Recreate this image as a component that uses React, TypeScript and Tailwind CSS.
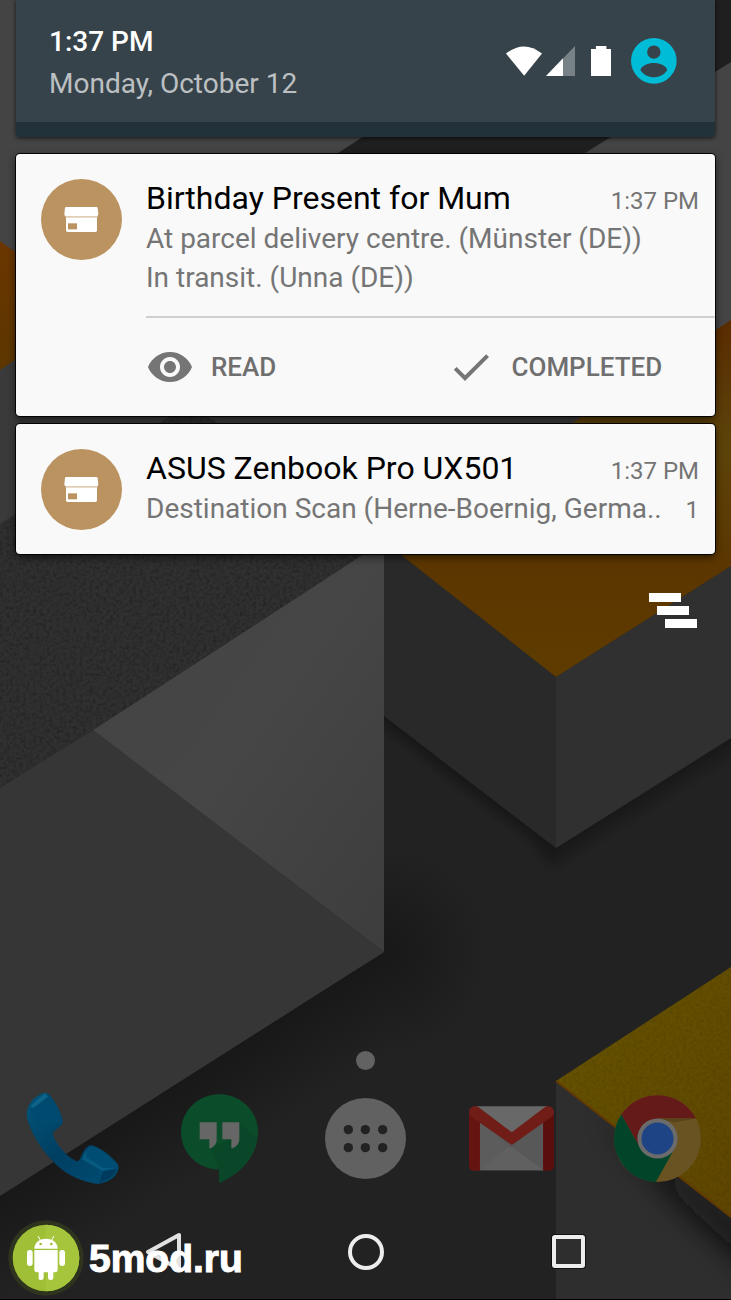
import type { ReactNode } from "react";

function Wallpaper() {
  return (
    <svg
      className="absolute inset-0 -z-10 h-full w-full"
      viewBox="0 0 731 1300"
      preserveAspectRatio="xMidYMid slice"
      aria-hidden="true"
    >
      <defs>
        <linearGradient id="lightFace" x1="0" y1="0" x2="1" y2="1">
          <stop offset="0" stopColor="#434343" />
          <stop offset="0.5" stopColor="#464646" />
          <stop offset="1" stopColor="#3d3d3d" />
        </linearGradient>
        <linearGradient id="orange" x1="0" y1="0" x2="0" y2="1">
          <stop offset="0" stopColor="#5a2c00" />
          <stop offset="0.35" stopColor="#5c430a" />
          <stop offset="0.7" stopColor="#5c3600" />
          <stop offset="1" stopColor="#5e3c00" />
        </linearGradient>
        <linearGradient id="leftOrange" x1="0" y1="0" x2="0" y2="1">
          <stop offset="0" stopColor="#6b3600" />
          <stop offset="1" stopColor="#5c3600" />
        </linearGradient>
        <linearGradient id="yellow" x1="0" y1="0" x2="1" y2="1">
          <stop offset="0" stopColor="#665400" />
          <stop offset="1" stopColor="#5f4600" />
        </linearGradient>
        <linearGradient id="slabShadow" gradientUnits="userSpaceOnUse" x1="192" y1="1074" x2="240" y2="1150">
          <stop offset="0" stopColor="#181818" />
          <stop offset="1" stopColor="#181818" stopOpacity="0" />
        </linearGradient>
        <radialGradient id="slabCorner" gradientUnits="userSpaceOnUse" cx="384" cy="952" r="104">
          <stop offset="0" stopColor="#181818" />
          <stop offset="1" stopColor="#181818" stopOpacity="0" />
        </radialGradient>
        <linearGradient id="cubeShadowLeft" gradientUnits="userSpaceOnUse" x1="470" y1="782" x2="460" y2="795">
          <stop offset="0" stopColor="#171717" />
          <stop offset="1" stopColor="#171717" stopOpacity="0" />
        </linearGradient>
        <linearGradient id="cubeShadowRight" gradientUnits="userSpaceOnUse" x1="643" y1="793" x2="655" y2="812">
          <stop offset="0" stopColor="#181818" />
          <stop offset="1" stopColor="#181818" stopOpacity="0" />
        </linearGradient>
        <radialGradient id="cubeCorner" gradientUnits="userSpaceOnUse" cx="556" cy="848" r="26">
          <stop offset="0" stopColor="#181818" />
          <stop offset="1" stopColor="#181818" stopOpacity="0" />
        </radialGradient>
        <clipPath id="lowerFace">
          <polygon points="556,1081 731,1217 731,1300 556,1300" />
        </clipPath>
        <filter id="blur" x="-40%" y="-40%" width="180%" height="180%">
          <feGaussianBlur stdDeviation="16" />
        </filter>
        <filter id="grain" x="0" y="0" width="100%" height="100%">
          <feTurbulence type="fractalNoise" baseFrequency="0.3" numOctaves="3" seed="4" />
          <feColorMatrix values="0 0 0 0 0  0 0 0 0 0  0 0 0 0 0  1.6 0 0 0 -0.65" />
          <feComposite in2="SourceGraphic" operator="in" />
        </filter>
      </defs>
      <rect width="731" height="1300" fill="#222222" />
      <polygon points="0,0 731,0 731,62 582,153 338,153 0,380" fill="#1f1f1f" />
      <polygon points="0,0 574,0 338,153 200,420 0,530" fill="#444444" />
      <polygon points="731,62 574,160 384,424 731,424" fill="#444444" />
      <polygon points="0,241 40,270 40,344 0,370" fill="url(#leftOrange)" />
      <polygon points="0,370 40,344 600,344 600,420 384,560 0,560" fill="#3a3a3a" />
      <polygon points="0,524 157,424 190,404 384,541 0,790" fill="#303030" />
      <polygon points="0,524 157,424 190,404 384,541 0,790" fill="#000" filter="url(#grain)" opacity="0.35" />
      <polygon points="384,716 556,848 556,868 384,736" fill="url(#cubeShadowLeft)" />
      <polygon points="556,848 731,738 731,778 556,888" fill="url(#cubeShadowRight)" />
      <path d="M556 822A26 26 0 0 0 556 874Z" fill="url(#cubeCorner)" />
      <polygon points="384,541 556,677 556,848 384,716" fill="#292929" />
      <polygon points="556,677 731,566 731,738 556,848" fill="#303030" />
      <polygon points="731,320 384,545 400,554 556,677 731,566" fill="url(#orange)" />
      <polygon points="384,952 0,1196 0,1300 384,1058" fill="url(#slabShadow)" />
      <path d="M384 848A104 104 0 0 1 384 1056Z" fill="url(#slabCorner)" />
      <polygon points="0,788 93,730 384,952 0,1196" fill="#363636" />
      <polygon points="93,730 384,541 384,952" fill="url(#lightFace)" />
      <polygon points="556,1081 731,1217 731,1300 556,1300" fill="#2e2e2e" />
      <g clipPath="url(#lowerFace)">
        <polygon points="600,1110 780,1250 780,1290 680,1200" fill="#0a0a0a" filter="url(#blur)" />
      </g>
      <polygon points="556,1081 731,967 731,1217" fill="url(#yellow)" />
      <polygon points="556,1081 731,967 731,1217" fill="#000" filter="url(#grain)" opacity="0.14" />
      <line x1="556" y1="1081" x2="731" y2="1217" stroke="#633a00" strokeWidth="2" />
    </svg>
  );
}

function StatusHeader() {
  return (
    <header className="mx-4 rounded-b-sm bg-gradient-to-b from-[#1e292f] to-[#22323a] pb-[15px] shadow-[0_1px_4px_rgba(0,0,0,0.7)]">
      <div className="flex h-[122px] items-center justify-between bg-[#37434a] pr-[38px] pl-[33px]">
        <div className="pt-1 text-[28px] leading-[42px]">
          <p className="font-medium text-white">1:37 PM</p>
          <p className="text-[#bcc0c3]">Monday, October 12</p>
        </div>
        <div className="flex items-center">
          <svg className="h-[30px] w-9" viewBox="78 137 109 89" aria-label="Wi-Fi">
            <path d="M78 159 Q132 116 187 159 L133 226Z" fill="#fff" />
          </svg>
          <svg className="ml-1 h-[30px] w-[29px]" viewBox="198 138 87 90" aria-label="Signal">
            <path d="M285 138V228H198Z" fill="#788185" />
            <path d="M249 175V228H198Z" fill="#fff" />
          </svg>
          <svg className="ml-4 h-[30px] w-5" viewBox="333 135 61 91" aria-label="Battery">
            <path d="M348 135h32v9h14v82h-61v-82h15z" fill="#fff" />
          </svg>
          <button type="button" aria-label="User profile" className="ml-5">
            <svg className="size-[46px]" viewBox="454 114 137 137">
              <circle cx="522" cy="182" r="68" fill="#00bcd7" />
              <circle cx="522" cy="156" r="20" fill="#37434a" />
              <path d="M482 209C492 182 552 182 562 209C544 238 500 238 482 209Z" fill="#37434a" />
            </svg>
          </button>
        </div>
      </div>
    </header>
  );
}

function ParcelIcon() {
  return (
    <svg className="mt-0.5 size-[81px] shrink-0" viewBox="0 0 243 243" aria-hidden="true">
      <circle cx="121.500" cy="121.500" r="121.500" fill="#ba9360" />
      <path d="M75 84H166Q169 84 170 87L172 105Q172 111 168 111H74Q70 111 70 105L72 87Q73 84 75 84Z" fill="#fff" />
      <path d="M75 115H168V154Q168 159 163 159H80Q75 159 75 154Z" fill="#fff" />
      <rect x="73" y="111" width="97" height="4" fill="#e0cdb5" />
      <rect x="81" y="133" width="27" height="18" fill="#ba9360" />
    </svg>
  );
}

function Notification({
  title,
  lines,
  count,
  children,
}: {
  title: string;
  lines: string[];
  count?: number;
  children?: ReactNode;
}) {
  return (
    <article className="overflow-hidden rounded bg-[#f9f9f9] shadow-[0_0_0_1px_rgba(0,0,0,0.9),0_3px_8px_rgba(0,0,0,0.6)]">
      <div className={`flex gap-6 pt-[23px] pr-4 pl-[25px] ${children ? "pb-[19px]" : "pb-6"}`}>
        <ParcelIcon />
        <div className="min-w-0 flex-1">
          <div className="flex items-baseline justify-between">
            <h2 className="truncate text-[32px] leading-[42px] text-black">{title}</h2>
            <time className="shrink-0 text-2xl leading-none text-[#757575]">1:37 PM</time>
          </div>
          <div className="flex items-baseline justify-between text-[28px] leading-[39px] text-[#757575]">
            <div>
              {lines.map((line) => (
                <p key={line}>{line}</p>
              ))}
            </div>
            {count !== undefined && <span className="text-2xl leading-none">{count}</span>}
          </div>
        </div>
      </div>
      {children}
    </article>
  );
}

function Actions() {
  return (
    <div className="ml-[130px] grid h-[100px] grid-cols-2 border-t-2 border-[#cfcfcf] text-[26px] font-medium text-[#6f6f6f]">
      <button type="button" className="flex items-center gap-[17px]">
        <svg className="size-12" viewBox="0 0 24 24" fill="#757575">
          <path d="M12 4.500C7 4.500 2.730 7.610 1 12c1.730 4.390 6 7.500 11 7.500s9.270-3.110 11-7.500c-1.730-4.390-6-7.500-11-7.500zM12 17c-2.760 0-5-2.240-5-5s2.240-5 5-5 5 2.240 5 5-2.240 5-5 5zm0-8c-1.660 0-3 1.340-3 3s1.340 3 3 3 3-1.340 3-3-1.340-3-3-3z" />
        </svg>
        READ
      </button>
      <button type="button" className="flex items-center gap-[17px] pl-4">
        <svg className="size-12" viewBox="0 0 24 24" fill="#757575">
          <path d="M9 16.170L4.830 12l-1.420 1.410L9 19 21 7l-1.410-1.410z" />
        </svg>
        COMPLETED
      </button>
    </div>
  );
}

function PhoneIcon() {
  return (
    <svg className="h-[92px] w-[94px]" viewBox="80 30 282 276" aria-hidden="true">
      <defs>
        <linearGradient id="phoneBody" x1="0" y1="0" x2="1" y2="1">
          <stop offset="0" stopColor="#00557a" />
          <stop offset="0.5" stopColor="#003f62" />
          <stop offset="1" stopColor="#004d75" />
        </linearGradient>
      </defs>
      <path
        d="M137 32C120 34 97 52 88 72C80 90 82 104 85 115C98 158 126 205 172 250C205 280 250 302 298 306C322 302 346 288 352 274C360 262 360 250 350 240C330 218 300 194 276 190C262 190 252 208 246 222C242 232 238 240 230 237C200 222 172 190 160 156C160 146 184 136 190 124C194 108 172 66 152 40Q146 32 137 32Z"
        fill="url(#phoneBody)"
      />
      <path d="M140 36L100 70Q90 84 98 98L122 128Q142 134 186 118C190 104 170 62 150 40Q146 34 140 36Z" fill="#004a70" />
      <path d="M137 34L93 72L102 78L146 44Z" fill="#0d6388" />
      <path d="M274 192C264 200 254 214 250 230L308 264Q336 268 355 256C356 244 300 194 274 192Z" fill="#004d74" />
      <path d="M260 208Q252 222 249 232L308 266L350 258L310 257L260 226Z" fill="#085b80" />
      <path d="M298 304L312 268L352 262Q354 280 298 304Z" fill="#003a5e" />
    </svg>
  );
}

function HangoutsIcon() {
  return (
    <svg className="h-[89px] w-[77px]" viewBox="543 39 231 266" aria-hidden="true">
      <path
        d="M658 39C722 39 774 89 774 152C774 225 720 280 657 305V265C594 265 543 215 543 152C543 89 594 39 658 39Z"
        fill="#0b4d2b"
      />
      <path d="M718 123L772 170C754 245 706 285 657 305V265L630 202L718 160Z" fill="#0a4728" />
      <path d="M599 123h51v52c0 12-8 24-22 27v-28h-29zM667 123h51v52c0 12-10 24-24 27v-28h-27z" fill="#666666" />
    </svg>
  );
}

function AppsIcon() {
  return (
    <svg className="size-[81px]" viewBox="0 0 243 243" aria-hidden="true">
      <circle cx="121.500" cy="121.500" r="121.500" fill="#616161" />
      <g fill="#222222">
        <circle cx="70" cy="95" r="14" />
        <circle cx="121" cy="95" r="14" />
        <circle cx="173" cy="95" r="14" />
        <circle cx="70" cy="149" r="14" />
        <circle cx="121" cy="149" r="14" />
        <circle cx="173" cy="149" r="14" />
      </g>
    </svg>
  );
}

function GmailIcon() {
  return (
    <svg className="h-[65px] w-[85px]" viewBox="27 195 256 195" aria-hidden="true">
      <rect x="45" y="196" width="220" height="192" fill="#626262" />
      <path d="M60 236L156 310L60 388Z" fill="#5c5c5c" />
      <path d="M60 236L156 310L252 236V388H225Z" fill="#585858" />
      <path d="M60 388L156 318L252 388Z" fill="#606060" />
      <path d="M50 196H262L156 274Z" fill="#686868" />
      <path d="M27 212V374Q27 390 43 390H60V230Z" fill="#651411" />
      <path d="M283 212V374Q283 390 267 390H250V230Z" fill="#5a0f0d" />
      <path d="M27 214C27 198 44 190 58 200L156 274L253 200C268 190 283 198 283 214Q283 222 276 227L156 312L34 227Q27 222 27 214Z" fill="#701c17" />
    </svg>
  );
}

function ChromeIcon() {
  return (
    <svg className="size-[87px]" viewBox="460 163 260 260" aria-hidden="true">
      <circle cx="590" cy="293" r="130" fill="#6a5322" />
      <path d="M482 221A130 130 0 0 1 705 233H590L540 325Z" fill="#641a18" />
      <path d="M482 221A130 130 0 0 0 585 423L640 325L590 293L536 318Z" fill="#00452a" />
      <path d="M590 233H705L640 245Z" fill="#5a451a" />
      <circle cx="590" cy="293" r="60" fill="#6b6b6b" />
      <circle cx="590" cy="293" r="48" fill="#1f4486" />
    </svg>
  );
}

function DockButton({ label, children }: { label: string; children: ReactNode }) {
  return (
    <button type="button" aria-label={label} className="flex items-center justify-center">
      {children}
    </button>
  );
}

function NavigationBar() {
  return (
    <nav className="grid h-24 grid-cols-3 border-b border-black px-[61px]">
      <button type="button" aria-label="Back" className="flex items-center justify-center">
        <svg className="size-10" viewBox="0 0 40 40" fill="none" stroke="#e2e2e2" strokeWidth="4" strokeLinejoin="round">
          <path d="M5 20L36 3V37Z" />
        </svg>
      </button>
      <button type="button" aria-label="Home" className="flex items-center justify-center">
        <span className="size-9 rounded-full border-4 border-[#ededed]" />
      </button>
      <button type="button" aria-label="Recent apps" className="flex items-center justify-center">
        <span className="size-[33px] rounded-[3px] border-4 border-[#ededed] shadow-[0_0_0_1px_rgba(0,0,0,0.6)]" />
      </button>
    </nav>
  );
}

function Watermark() {
  return (
    <a href="#5mod" className="absolute bottom-1 left-2 flex items-center gap-[5px]">
      <svg className="size-[76px]" viewBox="-114 -114 228 228" aria-hidden="true">
        <circle r="113" fill="#2f341f" />
        <circle r="100" fill="#9fc036" />
        <path d="M0 -100A100 100 0 0 1 0 100Z" fill="#a5c63c" />
        <g fill="#fff">
          <path d="M-35 -28C-35 -46 -20 -58 0 -58S35 -46 35 -28Z" />
          <path d="M-35 -24H35V35Q35 43 27 43H22V60Q22 66 14 66T6 60V43H-7V60Q-7 66 -15 66T-22 60V43H-27Q-35 43 -35 35Z" />
          <rect x="-57" y="-24" width="17" height="48" rx="8" />
          <rect x="40" y="-24" width="17" height="48" rx="8" />
        </g>
        <path d="M-16 -52L-24 -66M16 -52L24 -66" stroke="#fff" strokeWidth="3" />
        <circle cx="-16" cy="-42" r="4" fill="#9fc036" />
        <circle cx="16" cy="-42" r="4" fill="#9fc036" />
      </svg>
      <span className="font-['Liberation_Sans',sans-serif] text-[39px] leading-none font-bold text-white [-webkit-text-stroke:1px_white]">
        5mod.ru
      </span>
    </a>
  );
}

export default function App() {
  return (
    <div className="relative isolate flex min-h-screen flex-col overflow-hidden font-[Roboto,sans-serif]">
      <Wallpaper />
      <StatusHeader />
      <main className="mx-4 mt-[17px] flex flex-col gap-2">
        <Notification
          title="Birthday Present for Mum"
          lines={["At parcel delivery centre. (Münster (DE))", "In transit. (Unna (DE))"]}
        >
          <Actions />
        </Notification>
        <Notification
          title="ASUS Zenbook Pro UX501"
          lines={["Destination Scan (Herne-Boernig, Germa.."]}
          count={1}
        />
        <button type="button" aria-label="Clear all notifications" className="mt-[31px] mr-[18px] self-end">
          <svg className="h-9 w-12" viewBox="0 0 48 36" fill="#fff">
            <rect width="32" height="9" />
            <rect x="8" y="13" width="32" height="9" />
            <rect x="16" y="26" width="32" height="9" />
          </svg>
        </button>
      </main>
      <div className="flex-1" />
      <div className="mx-auto mb-[22px] size-[19px] rounded-full bg-[#626262]" />
      <div className="mb-[22px] grid h-[90px] grid-cols-5">
        <DockButton label="Phone">
          <PhoneIcon />
        </DockButton>
        <DockButton label="Hangouts">
          <HangoutsIcon />
        </DockButton>
        <DockButton label="All apps">
          <AppsIcon />
        </DockButton>
        <DockButton label="Gmail">
          <GmailIcon />
        </DockButton>
        <DockButton label="Chrome">
          <ChromeIcon />
        </DockButton>
      </div>
      <NavigationBar />
      <Watermark />
    </div>
  );
}
